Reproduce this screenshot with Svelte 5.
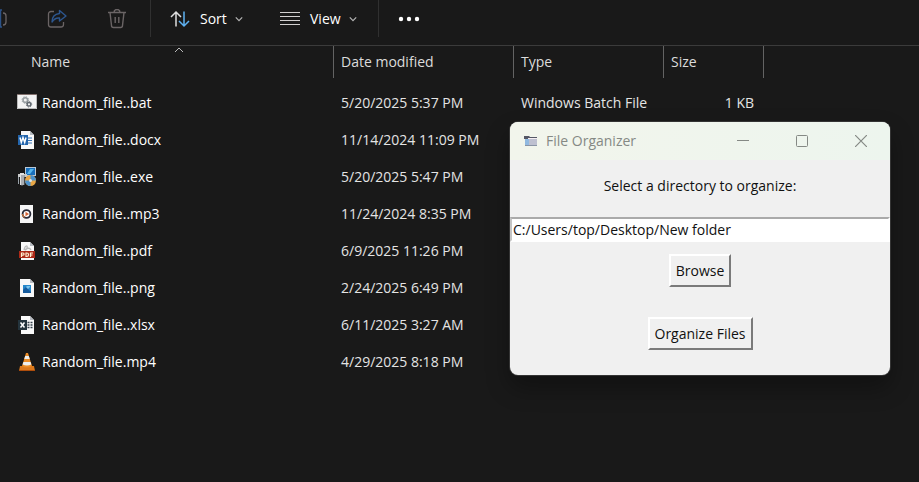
<script>
  const files = [
    { name: 'Random_file..bat', date: '5/20/2025 5:37 PM', type: 'Windows Batch File', size: '1 KB', icon: 'bat' },
    { name: 'Random_file..docx', date: '11/14/2024 11:09 PM', icon: 'docx' },
    { name: 'Random_file..exe', date: '5/20/2025 5:47 PM', icon: 'exe' },
    { name: 'Random_file..mp3', date: '11/24/2024 8:35 PM', icon: 'mp3' },
    { name: 'Random_file..pdf', date: '6/9/2025 11:26 PM', icon: 'pdf' },
    { name: 'Random_file..png', date: '2/24/2025 6:49 PM', icon: 'png' },
    { name: 'Random_file..xlsx', date: '6/11/2025 3:27 AM', icon: 'xlsx' },
    { name: 'Random_file.mp4', date: '4/29/2025 8:18 PM', icon: 'mp4' }
  ];
  let directory = $state('C:/Users/top/Desktop/New folder');
</script>

{#snippet chevron()}
  <svg class="chevron" width="8" height="8" viewBox="0 0 8 8"><path d="M.8 2.4 4 5.6l3.2-3.2" fill="none" stroke="#b4b4b4" stroke-width="1.2" /></svg>
{/snippet}

{#snippet page()}
  <path d="M4 1h9l4 4v14H4z" fill="#f8f8f8" />
  <path d="M13 1v4h4z" fill="#b5bac0" />
{/snippet}

{#snippet fileIcon(kind)}
  <svg class="file-icon" width="20" height="20" viewBox="0 0 20 20" aria-hidden="true">
    {#if kind === 'bat'}
      <path d="M0 1h20v15H0z" fill="#f3f3f3" /><path d="M0 1h20v1H0z" fill="#81706d" /><path d="M.5 2v13.500h19V2" fill="none" stroke="#bbb" />
      <circle cx="8.300" cy="7" r="2.300" fill="none" stroke="#9aa0a3" stroke-width="1.600" />
      <circle cx="8.300" cy="7" r="3.300" fill="none" stroke="#9aa0a3" stroke-dasharray="1.300 1.300" />
      <circle cx="12" cy="11.300" r="1.800" fill="none" stroke="#626970" stroke-width="1.400" />
      <circle cx="12" cy="11.300" r="2.700" fill="none" stroke="#626970" stroke-dasharray="1.100 1" />
    {:else if kind === 'docx'}
      {@render page()}
      <path d="M11 8h4M11 10.500h4M11 13h4" stroke="#3974b5" />
      <path d="M1 5h10v10H1z" fill="#2466ad" />
      <path d="m3 7.500 1.300 5 1.700-5 1.700 5 1.300-5" fill="none" stroke="#fff" stroke-width="1.400" />
    {:else if kind === 'exe'}
      <path d="M8 0h11v9H8z" fill="#b9c8d5" /><path d="M9 1h9v7H9z" fill="#176fbd" /><path d="m10 7 3-5h4l-4 5z" fill="#55b5ec" />
      <path d="M1 7h9v3H1z" fill="#c8cacb" /><path d="M3 6h4v12H3z" fill="#e0e1e2" /><path d="M5 8v11M7 8v10" stroke="#73797e" />
      <path d="M1 10h1v7H1z" fill="#98a1a8" />
      <circle cx="13.500" cy="13.500" r="5.500" fill="#e8a747" /><path d="M13.500 8a5.500 5.500 0 0 1 5.500 5.500h-5.500zM8 13.500h5.500V19A5.500 5.500 0 0 1 8 13.500" fill="#4b91cb" /><circle cx="13.500" cy="13.500" r="1.500" fill="#dde7ed" />
    {:else if kind === 'mp3'}
      <path d="M3 1h13v18H3z" fill="#f5f5f5" />
      <circle cx="9.500" cy="10" r="3.900" fill="#fff" stroke="#292a38" stroke-width="1.800" />
      <path d="M5.500 10a4 4 0 0 0 2 3.400" fill="none" stroke="#bd6e3b" stroke-width="1.500" /><path d="m8.500 7.800 3.500 2.200-3.500 2.200z" fill="#d46131" />
    {:else if kind === 'pdf'}
      {@render page()}
      <path d="M7 9c1-5 4-5 3-2s-3 2-1 1 4-1 5 1" fill="none" stroke="#b8b8b8" stroke-width="1.300" />
      <path d="M2 10h16v7H2z" fill="#ad2917" />
      <path d="M4.500 16v-4H6a1 1 0 0 1 0 2.200H4.500M9 12v3.500h.8a1.700 1.700 0 0 0 0-3.500zM13.500 16v-4H16m-2.500 2h2" fill="none" stroke="#fff1d4" stroke-width="1.200" />
    {:else if kind === 'png'}
      <path d="M3 1h10l4 4v14H3z" fill="#f8f8f8" /><path d="M13 1v4h4z" fill="#b5bac0" />
      <path d="M6 7h8v8H6z" fill="#2587ca" /><path d="m6 12 3-3 5 5v1H6z" fill="#165b9d" /><path d="m9 9 2 2 2-2V8h-3z" fill="#7cc3ec" />
    {:else if kind === 'xlsx'}
      {@render page()}
      <path d="M10.500 7.500h5M10.500 10h5M10.500 12.500h5" stroke="#34404b" stroke-dasharray="2 1" stroke-width="1.300" />
      <path d="M1 5h9v10H1z" fill="#24343d" /><path d="m3.500 7.500 4 5m0-5-4 5" stroke="#fff" stroke-width="1.500" />
    {:else}
      <path d="m3 14-1 5h16l-1-5z" fill="#dc781b" /><path d="M2 18h16v1H2z" fill="#ad4d0c" />
      <path d="M9 1h2l4 13q-5 3-10 0z" fill="#ec8c25" />
      <path d="M8.200 4h3.600l.9 3H7.300zM6.400 10h7.200l.8 2.500q-4.400 2-8.800 0z" fill="#efefed" />
    {/if}
  </svg>
{/snippet}

<main class="explorer">
  <div class="toolbar" role="toolbar" aria-label="File commands">
    <button class="tool" aria-label="Rename">
      <svg width="20" height="20" viewBox="0 0 20 20" fill="none"><path d="M11 4H4a2 2 0 0 0-2 2v8a2 2 0 0 0 2 2h7M16 4a3 3 0 0 1 3 3v6a3 3 0 0 1-3 3" stroke="#6a6465" stroke-width="1.300" /><path d="M11 1h4M11 18h4M13.500 1v17" stroke="#2c5287" stroke-width="1.400" /></svg>
    </button>
    <button class="tool" aria-label="Share">
      <svg width="20" height="20" viewBox="0 0 20 20" fill="none" stroke-linejoin="round"><path d="M7 2.500H4A2.500 2.500 0 0 0 1.500 5v10.500A2.500 2.500 0 0 0 4 18h10a2.500 2.500 0 0 0 2.500-2.500V13" stroke="#6a6465" stroke-width="1.300" /><path d="M12.500 1.500 19 7l-6.500 5V9C9 8.500 7 10 5 13c0-5 3-8 7.500-8.500z" stroke="#2d568e" stroke-width="1.400" /></svg>
    </button>
    <button class="tool" aria-label="Delete">
      <svg width="20" height="20" viewBox="0 0 20 20" fill="none" stroke="#6a6465" stroke-width="1.400"><path d="M1 3.500h18M7 3.500a3 3 0 0 1 6 0M3 3.500l1.500 13A2 2 0 0 0 6.500 18.500h7a2 2 0 0 0 2-2L17 3.500M8.200 8v6M11.800 8v6" /></svg>
    </button>
    <span class="separator"></span>
    <button class="command sort">
      <svg width="20" height="18" viewBox="0 0 20 18" fill="none" stroke-width="1.500"><path d="M6 16.500V2M1 7l5-5 5 5" stroke="#dedede" /><path d="M14 1.500V16M9 11l5 5 5-5" stroke="#5fb2f2" /></svg>
      <span>Sort</span>{@render chevron()}
    </button>
    <button class="command view">
      <svg width="20" height="14" viewBox="0 0 20 14" shape-rendering="crispEdges"><path d="M0 .5h20M0 4.500h20M0 8.500h20M0 12.500h20" stroke="#d2d0d0" /></svg>
      <span>View</span>{@render chevron()}
    </button>
    <span class="separator"></span>
    <button class="tool" aria-label="More options">
      <svg width="22" height="6" viewBox="0 0 22 6" fill="#fff"><circle cx="3" cy="3" r="2.200" /><circle cx="11" cy="3" r="2.200" /><circle cx="19" cy="3" r="2.200" /></svg>
    </button>
  </div>

  <table>
    <colgroup><col class="name-col" /><col class="date-col" /><col class="type-col" /><col class="size-col" /><col /></colgroup>
    <thead>
      <tr>
        <th scope="col" aria-sort="ascending"><div class="heading first">Name<svg class="sorted" width="10" height="6" viewBox="0 0 10 6"><path d="m1 5 4-4 4 4" fill="none" stroke="#bbb" /></svg></div></th>
        <th scope="col"><div class="heading">Date modified</div></th>
        <th scope="col"><div class="heading">Type</div></th>
        <th scope="col"><div class="heading">Size</div></th>
        <td><div class="heading"></div></td>
      </tr>
    </thead>
    <tbody>
      {#each files as file}
        <tr>
          <td><div class="file">{@render fileIcon(file.icon)}<span>{file.name}</span></div></td>
          <td>{file.date}</td>
          <td>{file.type ?? ''}</td>
          <td class="size">{file.size ?? ''}</td>
          <td></td>
        </tr>
      {/each}
    </tbody>
  </table>

  <section class="dialog" role="dialog" aria-labelledby="dialog-title">
    <header>
      <svg class="app-icon" width="14" height="12" viewBox="0 0 14 12"><path d="M0 1h5l1 1h7v2H0z" fill="#555765" /><path d="M1 4h12v7H1z" fill="#bec0d0" /><path d="M1 4h4v7H1z" fill="#91b9e0" /><path d="M4 3h9v1H4z" fill="#f5eef2" /><path d="M1 10.500h12" stroke="#8994a5" /></svg>
      <h1 id="dialog-title">File Organizer</h1>
      <button aria-label="Minimize"><svg width="12" height="12" viewBox="0 0 12 12"><path d="M0 5.500h12" stroke="#858985" /></svg></button>
      <button aria-label="Maximize"><svg width="12" height="12" viewBox="0 0 12 12"><rect x=".5" y=".5" width="11" height="11" rx="1" fill="none" stroke="#858985" /></svg></button>
      <button aria-label="Close"><svg width="12" height="12" viewBox="0 0 12 12"><path d="m0 0 12 12m0-12L0 12" stroke="#858985" stroke-width="1.200" /></svg></button>
    </header>
    <form onsubmit={(event) => event.preventDefault()}>
      <label for="directory">Select a directory to organize:</label>
      <input id="directory" type="text" bind:value={directory} />
      <button type="button">Browse</button>
      <button type="submit">Organize Files</button>
    </form>
  </section>
</main>

<style>
  :global(body) { margin: 0; background: #191919; }
  .explorer {
    position: relative;
    min-height: 100vh;
    overflow: hidden;
    background: #191919;
    color: #e4e4e4;
    font: 14px/20px "Open Sans", "Noto Sans", sans-serif;
  }
  button { font: inherit; cursor: default; }
  svg { display: block; flex: none; }
  .toolbar {
    display: flex;
    align-items: center;
    height: 37px;
    padding-bottom: 8px;
    border-bottom: 1px solid #3b3b3b;
    margin-left: -33px;
  }
  .toolbar button { display: flex; align-items: center; height: 36px; padding: 0; border: 0; background: none; color: #fff; }
  .toolbar .tool { width: 60px; justify-content: center; }
  .separator { align-self: stretch; width: 1px; margin-left: 3px; background: #303030; }
  .toolbar .command { gap: 10px; box-sizing: border-box; }
  .command .chevron { margin-left: -2px; }
  .toolbar .sort { width: 110px; padding-left: 19px; }
  .toolbar .view { width: 114px; padding-left: 19px; }

  table { width: 100%; table-layout: fixed; border-collapse: collapse; }
  .name-col { width: 333px; }
  .date-col { width: 180px; }
  .type-col { width: 150px; }
  .size-col { width: 100px; }
  th, td { padding: 0; text-align: left; font-weight: 400; white-space: nowrap; }
  thead th, thead td { padding-bottom: 6px; }
  .heading { height: 32px; line-height: 32px; padding-left: 7px; border-left: 1px solid #636363; color: #dcdcdc; }
  .heading.first { position: relative; padding-left: 31px; border-left: 0; }
  .sorted { position: absolute; top: 1px; left: 174px; }
  tbody td { height: 37px; padding-left: 8px; }
  tbody td:first-child { padding-left: 17px; }
  tbody td.size { padding: 0 9px 0 0; text-align: right; }
  .file { display: flex; align-items: center; gap: 5px; color: #fff; }

  .dialog {
    position: absolute;
    top: 122px;
    left: 510px;
    width: 380px;
    overflow: hidden;
    border-radius: 8px;
    background: #f0f0f0;
    color: #111;
    box-shadow: 0 0 0 1px #343434, 0 12px 24px #0005;
  }
  header { display: flex; align-items: center; height: 38px; background: linear-gradient(90deg, #f2f5ec, #edf5ee); }
  .app-icon { margin: 0 8px 0 14px; }
  h1 { flex: 1; margin: 0; color: #858985; font-size: 14px; font-weight: 400; }
  header button { display: grid; place-items: center; width: 59px; height: 38px; padding: 0; border: 0; background: none; }
  form { display: flex; flex-direction: column; align-items: center; padding-bottom: 25px; }
  label { margin: 16px 0 21px; }
  input { box-sizing: border-box; width: 100%; height: 25px; margin-bottom: 12px; padding: 0 1px; border: 2px solid; border-color: #aaa #fff #fff #c4c4c4; background: #fff; color: #111; font: inherit; outline: 0; }
  form button { height: 33px; padding: 0 5px; border: 2px solid; border-color: #fff #7a7a7a #7a7a7a #fff; background: #f0f0f0; color: #111; }
  form button + button { margin-top: 30px; }
</style>
